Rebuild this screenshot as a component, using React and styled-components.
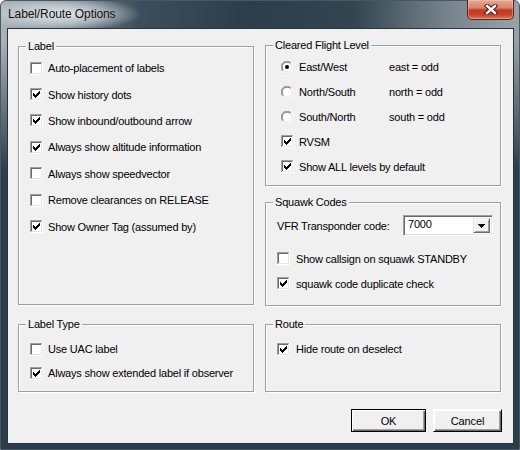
import React from "react";
import styled, { createGlobalStyle } from "styled-components";

const GlobalStyle = createGlobalStyle`
  html, body {
    margin: 0;
    padding: 0;
    background: #ffffff;
  }
  body {
    font-family: "Liberation Sans", Arial, sans-serif;
    font-size: 11px;
    color: #000;
  }
`;

const Window = styled.div`
  width: 520px;
  height: 450px;
  box-sizing: border-box;
  border: 1px solid #4a5661;
  border-radius: 6px 6px 0 0;
  padding: 0 5px 5px 6px;
  display: flex;
  flex-direction: column;
  background:
    radial-gradient(ellipse 78px 17px at 62px 13px, rgba(228, 233, 236, 0.97), rgba(228, 233, 236, 0.55) 55%, rgba(228, 233, 236, 0) 100%),
    linear-gradient(to bottom, rgba(43, 60, 74, 0) 0px, rgba(43, 60, 74, 0) 40px, #2b3c4a 170px),
    linear-gradient(to right, #aab4bb 0%, #8b979f 9%, #3c4e5b 27%, #2c3e4b 48%, #33454f 68%, #76838c 86%, #98a2a9 100%);
`;

const TitleBar = styled.div`
  height: 27px;
  flex: 0 0 27px;
  display: flex;
  align-items: flex-start;
  justify-content: space-between;
  padding-left: 1px;
`;

const Title = styled.span`
  font-family: "Liberation Sans", Arial, sans-serif;
  font-size: 12px;
  line-height: 15px;
  padding-top: 6px;
  color: #111;
  letter-spacing: -0.1px;
`;

const CloseButton = styled.div`
  width: 47px;
  height: 20px;
  margin-top: -1px;
  box-sizing: border-box;
  border: 1px solid #5e2418;
  border-top: none;
  border-radius: 0 0 5px 5px;
  display: flex;
  align-items: center;
  justify-content: center;
  background: linear-gradient(to bottom, #e6a895 0%, #d9836d 42%, #c13b22 52%, #c6432a 78%, #de7b62 100%);
  box-shadow: inset 0 0 0 1px rgba(255, 220, 210, 0.35);
`;

const Client = styled.div`
  flex: 1;
  box-sizing: border-box;
  border: 1px solid #27343d;
  background: #f0f0f0;
  display: flex;
  flex-direction: column;
`;

const Columns = styled.div`
  display: grid;
  grid-template-columns: 236px 236px;
  column-gap: 11px;
  padding-left: 10px;
  align-items: start;
`;

const Column = styled.div`
  display: flex;
  flex-direction: column;
`;

const Group = styled.div`
  position: relative;
  box-sizing: border-box;
  height: ${({ $h }) => $h}px;
  margin-top: ${({ $mt }) => $mt}px;
  padding: ${({ $pt }) => $pt}px 0 0 ${({ $pl }) => $pl}px;
  border: 1px solid #a0a0a0;
  box-shadow: inset 1px 1px 0 #ffffff, 1px 1px 0 #ffffff;
`;

const Legend = styled.span`
  position: absolute;
  top: -7px;
  left: 7px;
  padding: 0 2px;
  line-height: 13px;
  background: #f0f0f0;
  letter-spacing: -0.2px;
`;

const Row = styled.div`
  display: flex;
  align-items: center;
  height: ${({ $h }) => $h}px;
  margin-top: ${({ $mt }) => $mt || 0}px;
`;

const Text = styled.span`
  letter-spacing: -0.2px;
  white-space: nowrap;
  margin-left: ${({ $ml }) => $ml}px;
  width: ${({ $w }) => ($w ? `${$w}px` : "auto")};
  flex: ${({ $w }) => ($w ? "0 0 auto" : "initial")};
`;

const Combo = styled.div`
  width: 90px;
  height: 21px;
  box-sizing: border-box;
  display: flex;
  align-items: stretch;
  background: #fff;
  border-top: 1px solid #a0a0a0;
  border-left: 1px solid #a0a0a0;
  border-right: 1px solid #ffffff;
  border-bottom: 1px solid #ffffff;
  box-shadow: inset 1px 1px 0 #696969, inset -1px -1px 0 #e3e3e3;
  padding: 2px;
`;

const ComboValue = styled.span`
  flex: 1;
  padding-left: 2px;
  line-height: 13px;
  letter-spacing: -0.2px;
`;

const ComboArrow = styled.div`
  width: 17px;
  box-sizing: border-box;
  display: flex;
  align-items: center;
  justify-content: center;
  background: #f0f0f0;
  border-top: 1px solid #e3e3e3;
  border-left: 1px solid #e3e3e3;
  border-right: 1px solid #696969;
  border-bottom: 1px solid #696969;
  box-shadow: inset 1px 1px 0 #ffffff, inset -1px -1px 0 #a0a0a0;
`;

const ButtonRow = styled.div`
  display: flex;
  justify-content: flex-end;
  gap: 7px;
  margin-top: 17px;
  padding-right: 11px;
`;

const Button = styled.div`
  width: ${({ $w }) => $w}px;
  height: 23px;
  box-sizing: border-box;
  display: flex;
  align-items: center;
  justify-content: center;
  background: #f0f0f0;
  letter-spacing: -0.1px;
  border: 1px solid #000;
  box-shadow: inset 1px 1px 0 #ffffff, inset -1px -1px 0 #696969, inset -2px -2px 0 #a0a0a0;
  ${({ $default }) =>
    !$default ? "border-top-color:#fff;border-left-color:#fff;" : ""}
`;

// pixel columns of the classic check mark: [x, top]
const CHECK = [
  [3, 5],
  [4, 6],
  [5, 7],
  [6, 6],
  [7, 5],
  [8, 4],
  [9, 3],
];

const CheckBox = ({ checked }) => (
  <svg width="13" height="13" viewBox="0 0 13 13" shapeRendering="crispEdges" style={{ flex: "0 0 13px" }}>
    <rect x="0" y="0" width="13" height="13" fill="#ffffff" />
    <rect x="0" y="0" width="12" height="1" fill="#a0a0a0" />
    <rect x="0" y="0" width="1" height="12" fill="#a0a0a0" />
    <rect x="1" y="1" width="10" height="1" fill="#696969" />
    <rect x="1" y="1" width="1" height="10" fill="#696969" />
    <rect x="1" y="11" width="11" height="1" fill="#e3e3e3" />
    <rect x="11" y="1" width="1" height="11" fill="#e3e3e3" />
    {checked &&
      CHECK.map(([x, y]) => <rect key={x} x={x} y={y} width="1" height="3" fill="#000" />)}
  </svg>
);

const Radio = ({ checked }) => (
  <svg width="12" height="12" viewBox="0 0 12 12" style={{ flex: "0 0 12px" }}>
    <circle cx="6" cy="6" r="5.5" fill="#ffffff" />
    <path d="M1.8 10.2 A5.5 5.5 0 0 1 10.2 1.8" fill="none" stroke="#a0a0a0" strokeWidth="1" />
    <path d="M10.2 1.8 A5.5 5.5 0 0 1 1.8 10.2" fill="none" stroke="#ffffff" strokeWidth="1" />
    <path d="M2.5 9.5 A4.5 4.5 0 0 1 9.5 2.5" fill="none" stroke="#696969" strokeWidth="1" />
    <path d="M9.5 2.5 A4.5 4.5 0 0 1 2.5 9.5" fill="none" stroke="#e3e3e3" strokeWidth="1" />
    {checked && <circle cx="6" cy="6" r="2" fill="#000" />}
  </svg>
);

const CloseX = () => (
  <svg width="14" height="11" viewBox="0 0 14 11">
    <path d="M3 2 L11 9 M11 2 L3 9" stroke="#4a1c12" strokeWidth="4.4" strokeLinecap="square" fill="none" />
    <path d="M3 2 L11 9 M11 2 L3 9" stroke="#ffffff" strokeWidth="2.4" strokeLinecap="square" fill="none" />
  </svg>
);

const DownArrow = () => (
  <svg width="7" height="4" viewBox="0 0 7 4" shapeRendering="crispEdges">
    <path d="M0 0 H7 L3.5 4 Z" fill="#000" />
  </svg>
);

const CheckRow = ({ h, checked, label, mt, gap = 5 }) => (
  <Row $h={h} $mt={mt}>
    <CheckBox checked={checked} />
    <Text $ml={gap}>{label}</Text>
  </Row>
);

const RadioRow = ({ checked, label, hint }) => (
  <Row $h={25}>
    <Radio checked={checked} />
    <Text $ml={6} $w={90}>
      {label}
    </Text>
    <Text $ml={0}>{hint}</Text>
  </Row>
);

const labelOptions = [
  ["Auto-placement of labels", false],
  ["Show history dots", true],
  ["Show inbound/outbound arrow", true],
  ["Always show altitude information", true],
  ["Always show speedvector", false],
  ["Remove clearances on RELEASE", false],
  ["Show Owner Tag (assumed by)", true],
];

export default function App() {
  return (
    <>
      <GlobalStyle />
      <Window>
        <TitleBar>
          <Title>Label/Route Options</Title>
          <CloseButton>
            <CloseX />
          </CloseButton>
        </TitleBar>
        <Client>
          <Columns>
            <Column>
              <Group $mt={17} $h={259} $pt={8} $pl={11}>
                <Legend>Label</Legend>
                {labelOptions.map(([label, checked]) => (
                  <CheckRow key={label} h={26.4} checked={checked} label={label} />
                ))}
              </Group>
              <Group $mt={19} $h={68} $pt={12} $pl={11}>
                <Legend>Label Type</Legend>
                <CheckRow h={24} label="Use UAC label" />
                <CheckRow h={24} checked label="Always show extended label if observer" />
              </Group>
            </Column>
            <Column>
              <Group $mt={16} $h={141} $pt={8} $pl={15}>
                <Legend>Cleared Flight Level</Legend>
                <RadioRow checked label="East/West" hint="east = odd" />
                <RadioRow label="North/South" hint="north = odd" />
                <RadioRow label="South/North" hint="south = odd" />
                <CheckRow h={25} checked label="RVSM" />
                <CheckRow h={25} checked label="Show ALL levels by default" />
              </Group>
              <Group $mt={16} $h={104} $pt={11} $pl={11}>
                <Legend>Squawk Codes</Legend>
                <Row $h={23}>
                  <Text $ml={0} $w={126}>
                    VFR Transponder code:
                  </Text>
                  <Combo>
                    <ComboValue>7000</ComboValue>
                    <ComboArrow>
                      <DownArrow />
                    </ComboArrow>
                  </Combo>
                </Row>
                <CheckRow h={25} mt={9} gap={6} label="Show callsign on squawk STANDBY" />
                <CheckRow h={25} gap={6} checked label="squawk code duplicate check" />
              </Group>
              <Group $mt={18} $h={68} $pt={12} $pl={11}>
                <Legend>Route</Legend>
                <CheckRow h={24} gap={6} checked label="Hide route on deselect" />
              </Group>
            </Column>
          </Columns>
          <ButtonRow>
            <Button $w={75} $default>
              OK
            </Button>
            <Button $w={69}>Cancel</Button>
          </ButtonRow>
        </Client>
      </Window>
    </>
  );
}
